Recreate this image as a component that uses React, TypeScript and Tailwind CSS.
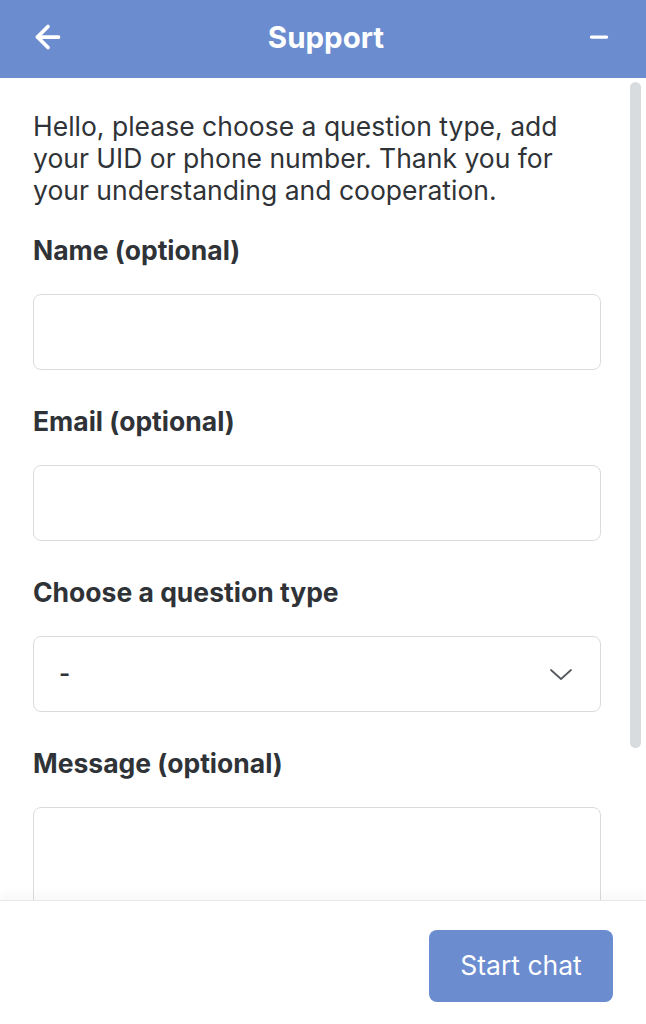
import { ArrowLeft, Minus } from "lucide-react";

const fields = [
    { label: "Name (optional)", kind: "input" },
    { label: "Email (optional)", kind: "input" },
    { label: "Choose a question type", kind: "select" },
    { label: "Message (optional)", kind: "textarea" },
];

export default function App() {
    return (
        <div className="h-[1024px] w-[646px] flex flex-col bg-white font-['Inter',sans-serif] text-[#2f3337] overflow-hidden">
            {/* Header */}
            <header className="h-[78px] shrink-0 bg-[#6b8ccf] flex items-center justify-between pl-[30px] pr-[34px] pb-[4px] text-white">
                <ArrowLeft className="w-[36px] h-[36px]" strokeWidth={2.5} />
                <h1 className="text-[29.5px] font-bold">Support</h1>
                <Minus className="w-[26px] h-[26px]" strokeWidth={3} />
            </header>

            {/* Scroll area */}
            <div className="flex-1 flex min-h-0 overflow-hidden">
                <div className="flex-1 pl-[33px] pr-[29px] pt-[32px]">
                    <p className="text-[26.5px] leading-[32px] mb-[28px]">
                        Hello, please choose a question type, add your UID or phone number. Thank you for your
                        understanding and cooperation.
                    </p>
                    {fields.map((f) => (
                        <div key={f.label} className="mb-[35px]">
                            <label className="block text-[26.5px] font-bold leading-[32px] mb-[28px]">
                                {f.label}
                            </label>
                            {f.kind === "select" ? (
                                <div className="h-[76px] border border-[#d9dcdf] rounded-[8px] flex items-center justify-between pl-[25px] pr-[28px]">
                                    <span className="text-[24px] font-semibold">-</span>
                                    <svg width="22" height="11" viewBox="0 0 22 11" fill="none">
                                        <path d="M1 1l10 9 10-9" stroke="#555a60" strokeWidth="1.8" strokeLinecap="round" strokeLinejoin="round" />
                                    </svg>
                                </div>
                            ) : (
                                <div className={`${f.kind === "textarea" ? "h-[140px]" : "h-[76px]"} border border-[#d9dcdf] rounded-[8px]`} />
                            )}
                        </div>
                    ))}
                </div>
                <div className="w-[16px] shrink-0 pt-[4px] pr-[5px]">
                    <div className="w-[11px] h-[666px] rounded-full bg-[#d9dcdf]" />
                </div>
            </div>

            {/* Footer */}
            <footer className="h-[124px] shrink-0 border-t border-[#e6e8ea] shadow-[0_-6px_10px_rgba(0,0,0,0.03)] flex items-start justify-end pt-[29px] pr-[33px]">
                <button className="w-[184px] h-[72px] rounded-[8px] bg-[#6b8ccf] text-white text-[26.5px]">
                    Start chat
                </button>
            </footer>
        </div>
    );
}
